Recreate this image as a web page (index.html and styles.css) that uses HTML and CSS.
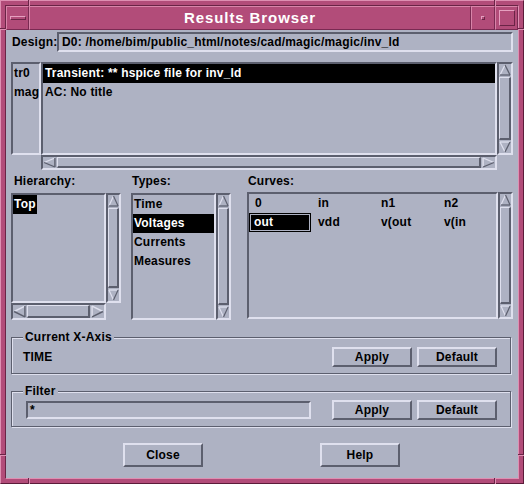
FILE: index.html
```html
<!DOCTYPE html>
<html>
<head>
<meta charset="utf-8">
<title>Results Browser</title>
<link rel="stylesheet" href="styles.css">
</head>
<body>
<div class="window">
  <span class="seam seam-v seam-t1"></span>
  <span class="seam seam-v seam-t2"></span>
  <span class="seam seam-v seam-b1"></span>
  <span class="seam seam-v seam-b2"></span>
  <span class="seam seam-h seam-l1"></span>
  <span class="seam seam-h seam-l2"></span>
  <span class="seam seam-h seam-r1"></span>
  <span class="seam seam-h seam-r2"></span>
  <div class="inner">
    <div class="titlebar">
      <div class="tb tb-menu"><span class="menu-bar"></span></div>
      <div class="tb tb-title">Results Browser</div>
      <div class="tb tb-min"><span class="min-dot"></span></div>
      <div class="tb tb-max"><span class="max-sq"></span></div>
    </div>
    <div class="content">
      <div class="design-row">
        <span class="design-label">Design:</span>
        <div class="field design-field">D0: /home/bim/public_html/notes/cad/magic/magic/inv_ld</div>
      </div>

      <div class="results">
        <div class="sunken ids">
          <div class="row">tr0</div>
          <div class="row">mag</div>
        </div>
        <div class="sunken mainlist">
          <div class="row selected">Transient: ** hspice file for inv_ld</div>
          <div class="row">AC: No title</div>
        </div>
        <div class="vscroll">
          <span class="arrow"><svg viewBox="0 0 12 12" preserveAspectRatio="none"><line x1="1" y1="11" x2="6" y2="1" class="al"/><line x1="6" y1="1" x2="11" y2="11" class="ad"/><line x1="1" y1="11" x2="11" y2="11" class="ad"/></svg></span>
          <span class="thumb"></span>
          <span class="arrow"><svg viewBox="0 0 12 12" preserveAspectRatio="none"><line x1="1" y1="1" x2="11" y2="1" class="al"/><line x1="1" y1="1" x2="6" y2="11" class="al"/><line x1="6" y1="11" x2="11" y2="1" class="ad"/></svg></span>
        </div>
        <div class="blank"></div>
        <div class="hscroll">
          <span class="arrow"><svg viewBox="0 0 12 12" preserveAspectRatio="none"><line x1="1" y1="6" x2="11" y2="1" class="al"/><line x1="1" y1="6" x2="11" y2="11" class="ad"/><line x1="11" y1="1" x2="11" y2="11" class="ad"/></svg></span>
          <span class="thumb"></span>
          <span class="arrow"><svg viewBox="0 0 12 12" preserveAspectRatio="none"><line x1="1" y1="1" x2="1" y2="11" class="al"/><line x1="1" y1="1" x2="11" y2="6" class="al"/><line x1="1" y1="11" x2="11" y2="6" class="ad"/></svg></span>
        </div>
      </div>

      <div class="panels">
        <div class="panel panel-hier">
          <div class="plabel">Hierarchy:</div>
          <div class="hier-grid">
            <div class="sunken list">
              <div class="row"><span class="selected tight">Top</span></div>
            </div>
            <div class="vscroll">
              <span class="arrow"><svg viewBox="0 0 12 12" preserveAspectRatio="none"><line x1="1" y1="11" x2="6" y2="1" class="al"/><line x1="6" y1="1" x2="11" y2="11" class="ad"/><line x1="1" y1="11" x2="11" y2="11" class="ad"/></svg></span>
              <span class="thumb"></span>
              <span class="arrow"><svg viewBox="0 0 12 12" preserveAspectRatio="none"><line x1="1" y1="1" x2="11" y2="1" class="al"/><line x1="1" y1="1" x2="6" y2="11" class="al"/><line x1="6" y1="11" x2="11" y2="1" class="ad"/></svg></span>
            </div>
            <div class="hscroll">
              <span class="arrow"><svg viewBox="0 0 12 12" preserveAspectRatio="none"><line x1="1" y1="6" x2="11" y2="1" class="al"/><line x1="1" y1="6" x2="11" y2="11" class="ad"/><line x1="11" y1="1" x2="11" y2="11" class="ad"/></svg></span>
              <span class="thumb"></span>
              <span class="arrow"><svg viewBox="0 0 12 12" preserveAspectRatio="none"><line x1="1" y1="1" x2="1" y2="11" class="al"/><line x1="1" y1="1" x2="11" y2="6" class="al"/><line x1="1" y1="11" x2="11" y2="6" class="ad"/></svg></span>
            </div>
            <div class="blank"></div>
          </div>
        </div>

        <div class="panel panel-types">
          <div class="plabel">Types:</div>
          <div class="types-grid">
            <div class="sunken list">
              <div class="row">Time</div>
              <div class="row selected">Voltages</div>
              <div class="row">Currents</div>
              <div class="row">Measures</div>
            </div>
            <div class="vscroll">
              <span class="arrow"><svg viewBox="0 0 12 12" preserveAspectRatio="none"><line x1="1" y1="11" x2="6" y2="1" class="al"/><line x1="6" y1="1" x2="11" y2="11" class="ad"/><line x1="1" y1="11" x2="11" y2="11" class="ad"/></svg></span>
              <span class="thumb"></span>
              <span class="arrow"><svg viewBox="0 0 12 12" preserveAspectRatio="none"><line x1="1" y1="1" x2="11" y2="1" class="al"/><line x1="1" y1="1" x2="6" y2="11" class="al"/><line x1="6" y1="11" x2="11" y2="1" class="ad"/></svg></span>
            </div>
          </div>
        </div>

        <div class="panel panel-curves">
          <div class="plabel">Curves:</div>
          <div class="curves-grid">
            <div class="sunken curves">
              <div class="cell">0</div>
              <div class="cell">in</div>
              <div class="cell">n1</div>
              <div class="cell">n2</div>
              <div class="cell cell-focus"><span class="focus-box"><span class="focus-fill">out</span></span></div>
              <div class="cell">vdd</div>
              <div class="cell">v(out</div>
              <div class="cell">v(in</div>
            </div>
            <div class="vscroll">
              <span class="arrow"><svg viewBox="0 0 12 12" preserveAspectRatio="none"><line x1="1" y1="11" x2="6" y2="1" class="al"/><line x1="6" y1="1" x2="11" y2="11" class="ad"/><line x1="1" y1="11" x2="11" y2="11" class="ad"/></svg></span>
              <span class="thumb"></span>
              <span class="arrow"><svg viewBox="0 0 12 12" preserveAspectRatio="none"><line x1="1" y1="1" x2="11" y2="1" class="al"/><line x1="1" y1="1" x2="6" y2="11" class="al"/><line x1="6" y1="11" x2="11" y2="1" class="ad"/></svg></span>
            </div>
          </div>
        </div>
      </div>

      <div class="group group-axis">
        <span class="legend">Current X-Axis</span>
        <span class="axis-value">TIME</span>
        <div class="btns">
          <div class="btn">Apply</div>
          <div class="btn">Default</div>
        </div>
      </div>

      <div class="group group-filter">
        <span class="legend">Filter</span>
        <div class="field filter-field">*</div>
        <div class="btns">
          <div class="btn">Apply</div>
          <div class="btn">Default</div>
        </div>
      </div>

      <div class="actions">
        <div class="btn btn-big">Close</div>
        <div class="btn btn-big">Help</div>
      </div>
    </div>
  </div>
</div>
</body>
</html>
```

FILE: styles.css
```css
* { box-sizing: border-box; }
html, body { margin: 0; padding: 0; }
body {
  width: 524px;
  height: 484px;
  overflow: hidden;
  background: #b24c79;
  font-family: "Liberation Sans", Arial, sans-serif;
  font-weight: bold;
  font-size: 12px;
  letter-spacing: 0.2px;
  color: #000;
}

.window {
  position: relative;
  width: 524px;
  height: 484px;
  background: #b24c79;
  border-top: 1px solid #de8fb2;
  border-left: 1px solid #de8fb2;
  border-right: 1px solid #5c1c3a;
  border-bottom: 1px solid #5c1c3a;
  padding: 4px;
}

.seam { position: absolute; }
.seam-v { width: 2px; height: 6px; border-left: 1px solid #6a2446; border-right: 1px solid #de8fb2; }
.seam-h { height: 2px; width: 6px; border-top: 1px solid #6a2446; border-bottom: 1px solid #de8fb2; }
.seam-t1 { top: -1px; left: 27px; }
.seam-t2 { top: -1px; left: 493px; }
.seam-b1 { bottom: -1px; left: 27px; }
.seam-b2 { bottom: -1px; left: 493px; }
.seam-l1 { left: -1px; top: 27px; }
.seam-l2 { left: -1px; top: 453px; }
.seam-r1 { right: -1px; top: 27px; }
.seam-r2 { right: -1px; top: 453px; }

.inner {
  height: 474px;
  border-top: 1px solid #6a2446;
  border-left: 1px solid #6a2446;
  border-right: 1px solid #de8fb2;
  border-bottom: 1px solid #de8fb2;
  display: flex;
  flex-direction: column;
}

/* title bar */
.titlebar { display: flex; height: 24px; flex: none; }
.tb {
  height: 24px;
  border-top: 1px solid #d885a9;
  border-left: 1px solid #d885a9;
  border-right: 1px solid #7a2a52;
  border-bottom: 1px solid #7a2a52;
  display: flex;
  align-items: center;
  justify-content: center;
}
.tb-menu { width: 23px; }
.tb-title {
  flex: 1;
  color: #fff;
  font-size: 15px;
  letter-spacing: 0.9px;
  line-height: 22px;
}
.tb-min { width: 24px; }
.tb-max { width: 23px; }
.menu-bar {
  width: 16px;
  height: 4px;
  border-top: 1px solid #e6a0c0;
  border-left: 1px solid #e6a0c0;
  border-bottom: 1px solid #6a2446;
  border-right: 1px solid #6a2446;
}
.min-dot {
  width: 4px;
  height: 4px;
  border-top: 1px solid #e6a0c0;
  border-left: 1px solid #e6a0c0;
  border-bottom: 1px solid #6a2446;
  border-right: 1px solid #6a2446;
}
.max-sq {
  width: 16px;
  height: 16px;
  border-top: 1px solid #e6a0c0;
  border-left: 1px solid #e6a0c0;
  border-bottom: 1px solid #6a2446;
  border-right: 1px solid #6a2446;
}

/* content */
.content {
  flex: 1;
  background: #aeb2c3;
  padding-top: 2px;
}

.sunken {
  border-top: 2px solid #5c5f6e;
  border-left: 2px solid #5c5f6e;
  border-bottom: 2px solid #dfe0ee;
  border-right: 2px solid #dfe0ee;
}

.field {
  border-top: 2px solid #5c5f6e;
  border-left: 2px solid #5c5f6e;
  border-bottom: 2px solid #dfe0ee;
  border-right: 2px solid #dfe0ee;
  white-space: nowrap;
  overflow: hidden;
}

.design-row { display: flex; align-items: center; height: 20px; }
.design-label { width: 51px; padding-left: 6px; }
.design-field { width: 456px; height: 20px; line-height: 16px; padding: 0 3px; }

/* results list */
.results {
  margin-top: 10px;
  margin-left: 5px;
  display: grid;
  grid-template-columns: 30px 456px 16px;
  grid-template-rows: 93px 15px;
}
.row { height: 19px; line-height: 19px; padding: 0 1px; white-space: nowrap; overflow: hidden; }
.selected { background: #000; color: #fff; }
.tight { display: inline-block; padding: 0 1px; margin-left: -1px; }
.ids, .mainlist, .list { overflow: hidden; }
.mainlist .row { padding: 0 2px; }

/* scrollbars */
.vscroll, .hscroll {
  display: flex;
  border-top: 2px solid #5c5f6e;
  border-left: 2px solid #5c5f6e;
  border-bottom: 2px solid #dfe0ee;
  border-right: 2px solid #dfe0ee;
  overflow: hidden;
}
.vscroll { flex-direction: column; }
.hscroll { flex-direction: row; }
.arrow { flex: none; display: block; }
.vscroll .arrow { height: 12px; width: 100%; }
.hscroll .arrow { width: 13px; height: 100%; }
.arrow svg { display: block; width: 100%; height: 100%; }
.al { stroke: #dfe0ee; stroke-width: 1.3; }
.ad { stroke: #5c5f6e; stroke-width: 1.3; }
.thumb {
  flex: 1;
  border-top: 1px solid #dfe0ee;
  border-left: 1px solid #dfe0ee;
  border-bottom: 2px solid #5c5f6e;
  border-right: 2px solid #5c5f6e;
}
.vscroll .thumb { margin: 1px 0; }
.hscroll .thumb { margin: 0 1px; }

/* panels */
.panels { display: flex; margin-top: 4px; padding-left: 5px; }
.panel-hier { width: 110px; margin-right: 10px; }
.panel-types { width: 100px; margin-right: 16px; }
.panel-curves { width: 266px; }
.plabel { height: 14px; line-height: 14px; margin-bottom: 5px; padding-left: 1px; }
.panel-hier .plabel { padding-left: 3px; }

.hier-grid { display: grid; grid-template-columns: 95px 15px; grid-template-rows: 110px 17px; }
.types-grid { display: grid; grid-template-columns: 85px 15px; grid-template-rows: 127px; }
.curves-grid { display: grid; grid-template-columns: 251px 15px; grid-template-rows: 127px; margin-top: -1px; }

.curves {
  display: grid;
  grid-template-columns: 63px 63px 63px 58px;
  grid-auto-rows: 19px;
  align-content: start;
  overflow: hidden;
}
.cell { line-height: 19px; padding-left: 6px; white-space: nowrap; }
.cell-focus { padding-left: 0; }
.focus-box { display: block; width: 62px; height: 19px; border: 1px solid #000; padding: 1px; }
.focus-fill { display: block; height: 15px; line-height: 15px; background: #000; color: #fff; padding-left: 3px; }

/* groups */
.group {
  position: relative;
  margin-left: 5px;
  width: 500px;
  border: 1px solid #5c5f6e;
  box-shadow: inset 1px 1px 0 #dfe0ee, 1px 1px 0 #dfe0ee;
  display: flex;
  align-items: center;
  justify-content: space-between;
}
.legend {
  position: absolute;
  top: -8px;
  left: 11px;
  padding: 0 2px;
  line-height: 14px;
  background: #aeb2c3;
}
.group-axis { margin-top: 17px; padding: 9px 13px 6px 11px; }
.group-filter { margin-top: 17px; padding: 8px 13px 6px 11px; }
.filter-field { width: 285px; height: 18px; margin-left: 3px; line-height: 14px; padding: 0 2px; }

.btns { display: flex; gap: 5px; }
.btn {
  width: 80px;
  height: 20px;
  line-height: 16px;
  text-align: center;
  border-top: 2px solid #dfe0ee;
  border-left: 2px solid #dfe0ee;
  border-bottom: 2px solid #5c5f6e;
  border-right: 2px solid #5c5f6e;
}
.actions { display: flex; gap: 117px; margin-top: 16px; padding-left: 117px; }
.btn-big { height: 24px; line-height: 20px; }
```
